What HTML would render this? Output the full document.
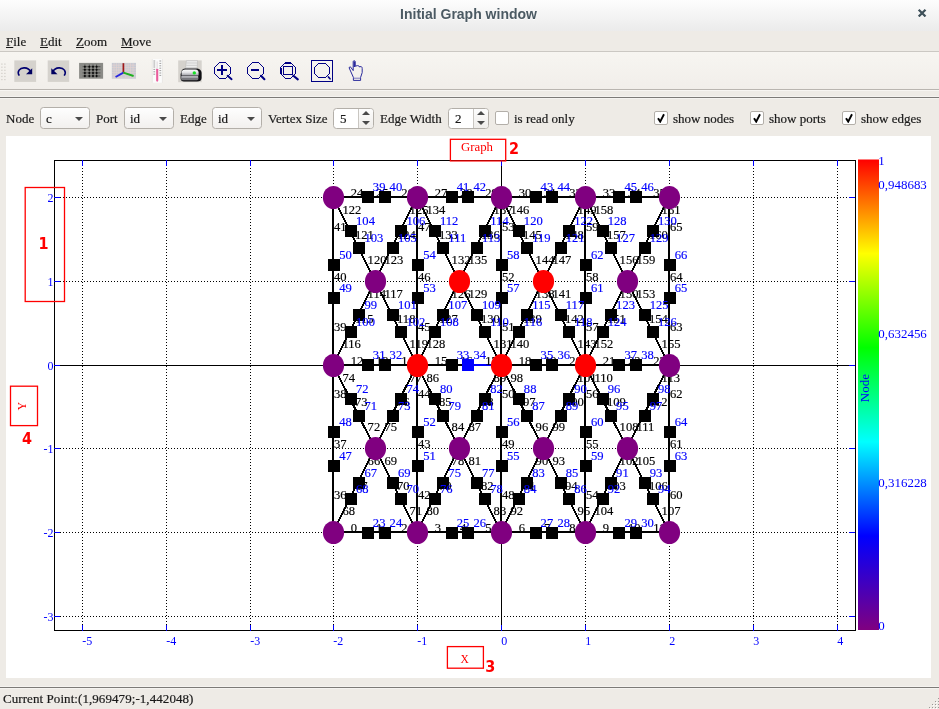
<!DOCTYPE html>
<html lang="en">
<head>
<meta charset="utf-8">
<title>Initial Graph window</title>
<style>
html,body{margin:0;padding:0;}
body{width:939px;height:709px;overflow:hidden;background:#eeebe6;font-family:"Liberation Serif",serif;font-size:13px;color:#1a1a1a;position:relative;-webkit-text-stroke:0.2px #1a1a1a;}
.abs{position:absolute;will-change:transform;}
#titlebar{left:0;top:0;width:939px;height:31px;background:linear-gradient(#fdfdfd 0,#f6f6f6 12px,#ebebeb 31px);}
#title{left:-1px;top:5px;width:939px;text-align:center;font-family:"Liberation Sans",sans-serif;font-weight:bold;font-size:14px;color:#4b5a63;line-height:18px;white-space:nowrap;text-shadow:0 1px 0 rgba(255,255,255,.8);-webkit-text-stroke:0;}
#close{left:912px;top:3px;width:18px;height:20px;font-family:"DejaVu Sans",sans-serif;font-weight:bold;font-size:15px;color:#4b5a63;line-height:20px;text-align:center;}
#menubar{left:0;top:31px;width:939px;height:20px;}
.menu{top:34px;line-height:16px;font-size:13px;white-space:nowrap;}
.menu u{text-decoration:underline;text-underline-offset:1px;}
#toolbar{left:0;top:51px;width:939px;height:39px;background:linear-gradient(#f7f5f1,#f1eeea);border-top:1px solid #cbc8c3;border-bottom:1px solid #b9b5b0;box-sizing:border-box;box-shadow:0 1px 0 #f7f5f2;}
#sep2{left:0;top:96px;width:939px;height:3px;background:linear-gradient(#f5f3f0 0,#f5f3f0 1px,#7c7a77 1px,#7c7a77 2px,#f5f3f0 2px);}
.lbl{top:111px;line-height:16px;white-space:nowrap;}
.combo{top:107px;height:22px;width:50px;box-sizing:border-box;border:1px solid #b3afa9;border-radius:3.5px;background:linear-gradient(#fefefe,#f2f0ee);}
.combo span{position:absolute;left:5px;top:3px;line-height:16px;}
.combo i{position:absolute;right:6px;top:8.5px;width:0;height:0;border-left:4px solid transparent;border-right:4px solid transparent;border-top:4.6px solid #4a4a4a;}
.spin{top:108px;height:21px;width:41px;box-sizing:border-box;border:1px solid #b3afa9;border-radius:3.5px;background:#fff;}
.spin span{position:absolute;left:6px;top:2px;line-height:16px;}
.spin b{position:absolute;right:0;top:0;width:14px;height:19px;border-left:1px solid #c9c6c1;background:linear-gradient(#fdfdfd,#efedea);border-radius:0 3px 3px 0;}
.spin b:before{content:"";position:absolute;left:3.2px;top:2.4px;border-left:4px solid transparent;border-right:4px solid transparent;border-bottom:4.8px solid #4a4a4a;}
.spin b:after{content:"";position:absolute;left:3.2px;top:12.2px;border-left:4px solid transparent;border-right:4px solid transparent;border-top:4.8px solid #4a4a4a;}
.chk{top:111px;width:14px;height:14px;box-sizing:border-box;border:1px solid #b3afa9;border-radius:2px;background:#fff;}
.chk svg{position:absolute;left:1px;top:1px;}
#panel{left:6px;top:136px;width:925px;height:542px;background:#fff;}
#sep3{left:0;top:686px;width:939px;height:3px;background:linear-gradient(#f5f3f0 0,#f5f3f0 1px,#7c7a77 1px,#7c7a77 2px,#f5f3f0 2px);}
#status{left:3px;top:691px;line-height:16px;white-space:nowrap;letter-spacing:0.07px;}
</style>
</head>
<body>
<div id="titlebar" class="abs"></div>
<div id="title" class="abs">Initial Graph window</div>
<svg class="abs" style="left:912px;top:3px" width="20" height="20" viewBox="912 3 20 20"><path d="M918.7 10.7L925.5 17.5M925.5 10.7L918.7 17.5" stroke="#fff" stroke-width="2.3" opacity=".8"/><path d="M918.7 9.7L925.5 16.5M925.5 9.7L918.7 16.5" stroke="#3f515a" stroke-width="2.3"/></svg>
<div id="menubar" class="abs"></div>
<div class="abs menu" style="left:6px"><u>F</u>ile</div>
<div class="abs menu" style="left:40px"><u>E</u>dit</div>
<div class="abs menu" style="left:76px"><u>Z</u>oom</div>
<div class="abs menu" style="left:121px"><u>M</u>ove</div>
<div id="toolbar" class="abs"></div>
<svg class="abs" style="left:0;top:52px" width="400" height="38" viewBox="0 52 400 38">
<defs>
<pattern id="hd" x="1" y="63" width="3" height="3" patternUnits="userSpaceOnUse"><rect x="0" y="0" width="1" height="1" fill="#c9c6c0"/></pattern>
<linearGradient id="prb" x1="0" y1="0" x2="0" y2="1"><stop offset="0" stop-color="#ffffff"/><stop offset="0.5" stop-color="#e4e4e8"/><stop offset="1" stop-color="#a2a2a8"/></linearGradient>
</defs>
<!-- handle -->
<g fill="#cfccc6"><rect x="1.3" y="63.5" width="1.2" height="1.2"/><rect x="4.3" y="63.5" width="1.2" height="1.2"/><rect x="1.3" y="66.6" width="1.2" height="1.2"/><rect x="4.3" y="66.6" width="1.2" height="1.2"/><rect x="1.3" y="69.7" width="1.2" height="1.2"/><rect x="4.3" y="69.7" width="1.2" height="1.2"/><rect x="1.3" y="72.8" width="1.2" height="1.2"/><rect x="4.3" y="72.8" width="1.2" height="1.2"/><rect x="1.3" y="75.9" width="1.2" height="1.2"/><rect x="4.3" y="75.9" width="1.2" height="1.2"/><rect x="1.3" y="79" width="1.2" height="1.2"/><rect x="4.3" y="79" width="1.2" height="1.2"/></g>
<!-- redo -->
<rect x="14.3" y="60.4" width="21.8" height="21.5" fill="#d5d2cd"/>
<path d="M19.3 75.6C16.6 71.6 19.6 67.6 24.6 67.9C27.6 68.1 29.6 69.6 30.8 71.6" fill="none" stroke="#000070" stroke-width="1.6"/>
<path d="M32.2 68.2L32.2 74.2L26 74.2Z" fill="#000060"/>
<!-- undo -->
<rect x="47.7" y="60.4" width="21.5" height="21.5" fill="#d5d2cd"/>
<path d="M64.2 75.6C66.9 71.6 63.9 67.6 58.9 67.9C55.9 68.1 53.9 69.6 52.7 71.6" fill="none" stroke="#000070" stroke-width="1.6"/>
<path d="M51.3 68.2L51.3 74.2L57.5 74.2Z" fill="#000060"/>
<!-- grid -->
<rect x="79.1" y="62.9" width="24" height="15.8" fill="#8b8b87"/>
<g stroke="#3a3a38" stroke-width="1" opacity="0.75"><path d="M84.9 64.5V77.5M89.3 64.5V77.5M93 64.5V77.5M96.6 64.5V77.5M82.6 66.7H100.4M82.6 69.7H100.4M82.6 72.9H100.4M82.6 76H100.4"/></g>
<g fill="#0a0a0a"><circle cx="84.9" cy="66.7" r="1"/><circle cx="89.3" cy="66.7" r="1"/><circle cx="93" cy="66.7" r="1"/><circle cx="96.6" cy="66.7" r="1"/><circle cx="84.9" cy="69.7" r="1"/><circle cx="89.3" cy="69.7" r="1"/><circle cx="93" cy="69.7" r="1"/><circle cx="96.6" cy="69.7" r="1"/><circle cx="84.9" cy="72.9" r="1"/><circle cx="89.3" cy="72.9" r="1"/><circle cx="93" cy="72.9" r="1"/><circle cx="96.6" cy="72.9" r="1"/><circle cx="84.9" cy="76" r="1"/><circle cx="89.3" cy="76" r="1"/><circle cx="93" cy="76" r="1"/><circle cx="96.6" cy="76" r="1"/></g>
<!-- axes -->
<rect x="111.8" y="62.9" width="24.2" height="15.8" fill="#c6cad4"/>
<g stroke="#e4d2d0" stroke-width="0.7"><path d="M114 63V78.6M116.4 63V78.6M118.8 63V78.6M121.2 63V78.6M125.8 63V78.6M128.2 63V78.6M130.6 63V78.6M133 63V78.6M112 65.2H136M112 67.6H136M112 70H136M112 72.4H136M112 74.8H136M112 77.2H136"/></g>
<path d="M123.4 63.2V72.6" stroke="#a01818" stroke-width="1.7" fill="none"/>
<path d="M123.4 72.6L115.6 77" stroke="#2828e0" stroke-width="1.9" fill="none"/>
<path d="M123.4 72.6L133.6 76" stroke="#20b020" stroke-width="1.9" fill="none"/>
<!-- thermometer -->
<rect x="152.1" y="59" width="10.5" height="23.7" fill="#fbfbfb"/>
<path d="M152.3 59V82.7M162.4 59V82.7" stroke="#dddad6" stroke-width="0.6"/>
<g stroke="#777" stroke-width="0.7"><path d="M153.4 61H155.2M153.4 63H155.2M153.4 65H155.2M153.4 67H155.2M153.4 69.4H155.2M153.4 71.8H155.2M153.4 74.2H155.2M159.4 61H161.2M159.4 63.4H161.2M159.4 65.8H161.2M159.4 68.2H161.2M159.4 70.6H161.2M159.4 73H161.2M159.4 75.4H161.2"/></g>
<path d="M157.2 69.2V80.6" stroke="#ea5c9c" stroke-width="2.1" stroke-linecap="round"/>
<path d="M157.2 61.5V69" stroke="#e8e4e6" stroke-width="1.6"/>
<!-- printer -->
<rect x="178.2" y="60.4" width="23.5" height="21.8" fill="#d5d2cd"/>
<path d="M186.4 60.6H197.6L197 70H185.4Z" fill="#ececec" stroke="#b4b4b4" stroke-width="0.5"/>
<path d="M186.5 63H197.4M186.2 65.4H197.2M186 67.6H197" stroke="#c4c4c4" stroke-width="0.7"/>
<path d="M181.5 72C181.5 70 183 68.6 185.6 68.6H196C199.6 68.6 201.6 70.6 201.6 73V78C201.6 80.4 200 81.6 197 81.6H184C182 81.6 180.6 80.6 180.6 78.6V74Z" fill="#101014"/>
<path d="M181.6 72.6C181.6 70.6 183 69.4 185.4 69.4H195.4C197.6 69.4 198.6 70.8 198.6 72.6V75.4H181.6Z" fill="url(#prb)"/>
<rect x="181" y="75.6" width="17.4" height="4.6" rx="1.4" fill="#77777d"/>
<rect x="181.6" y="76" width="16.4" height="1.8" fill="#b0b0b6"/>
<circle cx="194.3" cy="72.9" r="1.7" fill="#14e024"/>
<!-- zoom in -->
<g fill="none" stroke="#000084">
<g shape-rendering="crispEdges" stroke-width="1">
<path d="M219.5 62.5H225.5L230.5 67.5V73.5L225.5 78.5H219.5L214.5 73.5V67.5Z"/>
<path d="M252.5 62.5H258.5L263.5 67.5V73.5L258.5 78.5H252.5L247.5 73.5V67.5Z"/>
<path d="M285.5 62.5H290.5L295.5 67.5V73.5L290.5 78.5H285.5L280.5 73.5V67.5Z"/>
<path d="M285 63.5H291M281.5 68V74"/>
<rect x="283.5" y="66.5" width="9" height="8"/>
<rect x="311.5" y="60.5" width="21" height="21"/>
<path d="M318.5 63.5H325.5L329.5 67.5V73.5L325.5 77.5H318.5L314.5 73.5V67.5Z"/>
</g>
<g shape-rendering="crispEdges" stroke-width="2">
<path d="M217 70H227M222 65V75"/>
<path d="M251 70H259"/>
</g>
<path d="M227.6 75.8L231.6 79.2" stroke-width="1.9" stroke-linecap="round"/>
<path d="M261 75.8L264.4 79.2" stroke-width="2.1" stroke-linecap="round"/>
<path d="M293.4 75.8L297.8 79.4" stroke-width="2.1" stroke-linecap="round"/>
<path d="M328.4 77L330 78.8" stroke-width="1.7" stroke-linecap="round"/>
<!-- hand -->
<path d="M353.4 80.4V77.4L349 67.6L350.4 66.8L353.2 70.6V61.6C353.2 60.4 355.2 60.4 355.2 61.6V66.2L357.6 65.6C358.6 65.4 359 66 359 66.8L361 66.6C362 66.8 362.2 67.6 362.2 68.6V72.6L360.6 77.4V80.4Z" stroke-width="1" stroke="#2a2a9c"/>
<path d="M354.4 61.4V67" stroke-width="1.6" stroke="#2a2a9c"/>
<path d="M353.4 78.2H360.6" stroke-width="0.8" stroke="#5a5ab4"/>
</g>
</svg>

<div id="sep2" class="abs"></div>
<div class="abs lbl" style="left:6px">Node</div>
<div class="abs combo" style="left:40px"><span>c</span><i></i></div>
<div class="abs lbl" style="left:96px">Port</div>
<div class="abs combo" style="left:124px"><span>id</span><i></i></div>
<div class="abs lbl" style="left:180px">Edge</div>
<div class="abs combo" style="left:212px"><span>id</span><i></i></div>
<div class="abs lbl" style="left:268px">Vertex Size</div>
<div class="abs spin" style="left:333px"><span>5</span><b></b></div>
<div class="abs lbl" style="left:380px">Edge Width</div>
<div class="abs spin" style="left:448px"><span>2</span><b></b></div>
<div class="abs chk" style="left:495px"></div>
<div class="abs lbl" style="left:514px">is read only</div>
<div class="abs chk" style="left:654px"><svg width="10" height="10" viewBox="0 0 10 10"><path d="M2 5.2L4.2 8.6L8 1.2" fill="none" stroke="#000" stroke-width="1.9"/></svg></div>
<div class="abs lbl" style="left:673px">show nodes</div>
<div class="abs chk" style="left:750px"><svg width="10" height="10" viewBox="0 0 10 10"><path d="M2 5.2L4.2 8.6L8 1.2" fill="none" stroke="#000" stroke-width="1.9"/></svg></div>
<div class="abs lbl" style="left:769px">show ports</div>
<div class="abs chk" style="left:842px"><svg width="10" height="10" viewBox="0 0 10 10"><path d="M2 5.2L4.2 8.6L8 1.2" fill="none" stroke="#000" stroke-width="1.9"/></svg></div>
<div class="abs lbl" style="left:861px">show edges</div>
<div id="panel" class="abs">
<svg id="plot" width="925" height="542" viewBox="6 136 925 542">
<g stroke="#000" stroke-width="1" stroke-dasharray="1 2" fill="none" shape-rendering="crispEdges">
<path d="M82.5 631V160"/>
<path d="M166.5 631V160"/>
<path d="M250.5 631V160"/>
<path d="M333.5 631V160"/>
<path d="M417.5 631V160"/>
<path d="M585.5 631V160"/>
<path d="M669.5 631V160"/>
<path d="M753.5 631V160"/>
<path d="M837.5 631V160"/>
<path d="M54 616.5H856"/>
<path d="M54 532.5H856"/>
<path d="M54 448.5H856"/>
<path d="M54 281.5H856"/>
<path d="M54 197.5H856"/>
</g>
<g stroke="#000" stroke-width="1" fill="none" shape-rendering="crispEdges">
<path d="M501.5 160V631"/>
<path d="M54 365.5H856"/>
<rect x="54.5" y="160.5" width="801" height="470"/>
</g>
<g stroke="#00f" stroke-width="1" fill="none" shape-rendering="crispEdges">
<path d="M82.5 631v-6M82.5 160v6M166.5 631v-6M166.5 160v6M250.5 631v-6M250.5 160v6M333.5 631v-6M333.5 160v6M417.5 631v-6M417.5 160v6M501.5 631v-6M501.5 160v6M585.5 631v-6M585.5 160v6M669.5 631v-6M669.5 160v6M753.5 631v-6M753.5 160v6M837.5 631v-6M837.5 160v6M54 616.5h6M855 616.5h-6M54 532.5h6M855 532.5h-6M54 448.5h6M855 448.5h-6M54 365.5h6M855 365.5h-6M54 281.5h6M855 281.5h-6M54 197.5h6M855 197.5h-6"/>
</g>
<g stroke-width="2" fill="none" shape-rendering="crispEdges">
<path stroke="#000" d="M333 532L366.6 532M366.6 532L383.4 532M383.4 532L417 532M417 532L450.6 532M450.6 532L467.4 532M467.4 532L501 532M501 532L534.6 532M534.6 532L551.4 532M551.4 532L585 532M585 532L618.6 532M618.6 532L635.4 532M635.4 532L669 532M333 365L366.6 365M366.6 365L383.4 365M383.4 365L417 365M417 365L450.6 365M450.6 365L467.4 365M501 365L534.6 365M534.6 365L551.4 365M551.4 365L585 365M585 365L618.6 365M618.6 365L635.4 365M635.4 365L669 365M333 197L366.6 197M366.6 197L383.4 197M383.4 197L417 197M417 197L450.6 197M450.6 197L467.4 197M467.4 197L501 197M501 197L534.6 197M534.6 197L551.4 197M551.4 197L585 197M585 197L618.6 197M618.6 197L635.4 197M635.4 197L669 197M333 532L333 465.2M333 465.2L333 431.8M333 431.8L333 365M333 365L333 297.8M333 297.8L333 264.2M333 264.2L333 197M417 532L417 465.2M417 465.2L417 431.8M417 431.8L417 365M417 365L417 297.8M417 297.8L417 264.2M417 264.2L417 197M501 532L501 465.2M501 465.2L501 431.8M501 431.8L501 365M501 365L501 297.8M501 297.8L501 264.2M501 264.2L501 197M585 532L585 465.2M585 465.2L585 431.8M585 431.8L585 365M585 365L585 297.8M585 297.8L585 264.2M585 264.2L585 197M669 532L669 465.2M669 465.2L669 431.8M669 431.8L669 365M669 365L669 297.8M669 297.8L669 264.2M669 264.2L669 197M375 448L358.2 481.6M358.2 481.6L349.8 498.4M349.8 498.4L333 532M375 448L391.8 481.6M391.8 481.6L400.2 498.4M400.2 498.4L417 532M375 448L358.2 414.8M358.2 414.8L349.8 398.2M349.8 398.2L333 365M375 448L391.8 414.8M391.8 414.8L400.2 398.2M400.2 398.2L417 365M459 448L442.2 481.6M442.2 481.6L433.8 498.4M433.8 498.4L417 532M459 448L475.8 481.6M475.8 481.6L484.2 498.4M484.2 498.4L501 532M459 448L442.2 414.8M442.2 414.8L433.8 398.2M433.8 398.2L417 365M459 448L475.8 414.8M475.8 414.8L484.2 398.2M484.2 398.2L501 365M543 448L526.2 481.6M526.2 481.6L517.8 498.4M517.8 498.4L501 532M543 448L559.8 481.6M559.8 481.6L568.2 498.4M568.2 498.4L585 532M543 448L526.2 414.8M526.2 414.8L517.8 398.2M517.8 398.2L501 365M543 448L559.8 414.8M559.8 414.8L568.2 398.2M568.2 398.2L585 365M627 448L610.2 481.6M610.2 481.6L601.8 498.4M601.8 498.4L585 532M627 448L643.8 481.6M643.8 481.6L652.2 498.4M652.2 498.4L669 532M627 448L610.2 414.8M610.2 414.8L601.8 398.2M601.8 398.2L585 365M627 448L643.8 414.8M643.8 414.8L652.2 398.2M652.2 398.2L669 365M375 281L358.2 314.6M358.2 314.6L349.8 331.4M349.8 331.4L333 365M375 281L391.8 314.6M391.8 314.6L400.2 331.4M400.2 331.4L417 365M375 281L358.2 247.4M358.2 247.4L349.8 230.6M349.8 230.6L333 197M375 281L391.8 247.4M391.8 247.4L400.2 230.6M400.2 230.6L417 197M459 281L442.2 314.6M442.2 314.6L433.8 331.4M433.8 331.4L417 365M459 281L475.8 314.6M475.8 314.6L484.2 331.4M484.2 331.4L501 365M459 281L442.2 247.4M442.2 247.4L433.8 230.6M433.8 230.6L417 197M459 281L475.8 247.4M475.8 247.4L484.2 230.6M484.2 230.6L501 197M543 281L526.2 314.6M526.2 314.6L517.8 331.4M517.8 331.4L501 365M543 281L559.8 314.6M559.8 314.6L568.2 331.4M568.2 331.4L585 365M543 281L526.2 247.4M526.2 247.4L517.8 230.6M517.8 230.6L501 197M543 281L559.8 247.4M559.8 247.4L568.2 230.6M568.2 230.6L585 197M627 281L610.2 314.6M610.2 314.6L601.8 331.4M601.8 331.4L585 365M627 281L643.8 314.6M643.8 314.6L652.2 331.4M652.2 331.4L669 365M627 281L610.2 247.4M610.2 247.4L601.8 230.6M601.8 230.6L585 197M627 281L643.8 247.4M643.8 247.4L652.2 230.6M652.2 230.6L669 197"/>
<path stroke="#00f" d="M467.4 365L501 365"/>
</g>
<g font-family="'Liberation Serif',serif" font-size="12.0" fill="#000" stroke="#000" stroke-width="0.15">
<text transform="translate(350.8 531.9) scale(1.05 1)">0</text>
<text transform="translate(376 531.9) scale(1.05 1)">1</text>
<text transform="translate(401.2 531.9) scale(1.05 1)">2</text>
<text transform="translate(434.8 531.9) scale(1.05 1)">3</text>
<text transform="translate(460 531.9) scale(1.05 1)">4</text>
<text transform="translate(485.2 531.9) scale(1.05 1)">5</text>
<text transform="translate(518.8 531.9) scale(1.05 1)">6</text>
<text transform="translate(544 531.9) scale(1.05 1)">7</text>
<text transform="translate(569.2 531.9) scale(1.05 1)">8</text>
<text transform="translate(602.8 531.9) scale(1.05 1)">9</text>
<text transform="translate(628 531.9) scale(1.05 1)">10</text>
<text transform="translate(653.2 531.9) scale(1.05 1)">11</text>
<text transform="translate(350.8 364.9) scale(1.05 1)">12</text>
<text transform="translate(376 364.9) scale(1.05 1)">13</text>
<text transform="translate(401.2 364.9) scale(1.05 1)">14</text>
<text transform="translate(434.8 364.9) scale(1.05 1)">15</text>
<text transform="translate(460 364.9) scale(1.05 1)">16</text>
<text transform="translate(485.2 364.9) scale(1.05 1)">17</text>
<text transform="translate(518.8 364.9) scale(1.05 1)">18</text>
<text transform="translate(544 364.9) scale(1.05 1)">19</text>
<text transform="translate(569.2 364.9) scale(1.05 1)">20</text>
<text transform="translate(602.8 364.9) scale(1.05 1)">21</text>
<text transform="translate(628 364.9) scale(1.05 1)">22</text>
<text transform="translate(653.2 364.9) scale(1.05 1)">23</text>
<text transform="translate(350.8 196.9) scale(1.05 1)">24</text>
<text transform="translate(376 196.9) scale(1.05 1)">25</text>
<text transform="translate(401.2 196.9) scale(1.05 1)">26</text>
<text transform="translate(434.8 196.9) scale(1.05 1)">27</text>
<text transform="translate(460 196.9) scale(1.05 1)">28</text>
<text transform="translate(485.2 196.9) scale(1.05 1)">29</text>
<text transform="translate(518.8 196.9) scale(1.05 1)">30</text>
<text transform="translate(544 196.9) scale(1.05 1)">31</text>
<text transform="translate(569.2 196.9) scale(1.05 1)">32</text>
<text transform="translate(602.8 196.9) scale(1.05 1)">33</text>
<text transform="translate(628 196.9) scale(1.05 1)">34</text>
<text transform="translate(653.2 196.9) scale(1.05 1)">35</text>
<text transform="translate(334 498.5) scale(1.05 1)">36</text>
<text transform="translate(334 448.4) scale(1.05 1)">37</text>
<text transform="translate(334 398.3) scale(1.05 1)">38</text>
<text transform="translate(334 331.3) scale(1.05 1)">39</text>
<text transform="translate(334 280.9) scale(1.05 1)">40</text>
<text transform="translate(334 230.5) scale(1.05 1)">41</text>
<text transform="translate(418 498.5) scale(1.05 1)">42</text>
<text transform="translate(418 448.4) scale(1.05 1)">43</text>
<text transform="translate(418 398.3) scale(1.05 1)">44</text>
<text transform="translate(418 331.3) scale(1.05 1)">45</text>
<text transform="translate(418 280.9) scale(1.05 1)">46</text>
<text transform="translate(418 230.5) scale(1.05 1)">47</text>
<text transform="translate(502 498.5) scale(1.05 1)">48</text>
<text transform="translate(502 448.4) scale(1.05 1)">49</text>
<text transform="translate(502 398.3) scale(1.05 1)">50</text>
<text transform="translate(502 331.3) scale(1.05 1)">51</text>
<text transform="translate(502 280.9) scale(1.05 1)">52</text>
<text transform="translate(502 230.5) scale(1.05 1)">53</text>
<text transform="translate(586 498.5) scale(1.05 1)">54</text>
<text transform="translate(586 448.4) scale(1.05 1)">55</text>
<text transform="translate(586 398.3) scale(1.05 1)">56</text>
<text transform="translate(586 331.3) scale(1.05 1)">57</text>
<text transform="translate(586 280.9) scale(1.05 1)">58</text>
<text transform="translate(586 230.5) scale(1.05 1)">59</text>
<text transform="translate(670 498.5) scale(1.05 1)">60</text>
<text transform="translate(670 448.4) scale(1.05 1)">61</text>
<text transform="translate(670 398.3) scale(1.05 1)">62</text>
<text transform="translate(670 331.3) scale(1.05 1)">63</text>
<text transform="translate(670 280.9) scale(1.05 1)">64</text>
<text transform="translate(670 230.5) scale(1.05 1)">65</text>
<text transform="translate(367.6 464.7) scale(1.05 1)">66</text>
<text transform="translate(355 489.9) scale(1.05 1)">67</text>
<text transform="translate(342.4 515.1) scale(1.05 1)">68</text>
<text transform="translate(384.4 464.7) scale(1.05 1)">69</text>
<text transform="translate(397 489.9) scale(1.05 1)">70</text>
<text transform="translate(409.6 515.1) scale(1.05 1)">71</text>
<text transform="translate(367.6 431.3) scale(1.05 1)">72</text>
<text transform="translate(355 406.4) scale(1.05 1)">73</text>
<text transform="translate(342.4 381.5) scale(1.05 1)">74</text>
<text transform="translate(384.4 431.3) scale(1.05 1)">75</text>
<text transform="translate(397 406.4) scale(1.05 1)">76</text>
<text transform="translate(409.6 381.5) scale(1.05 1)">77</text>
<text transform="translate(451.6 464.7) scale(1.05 1)">78</text>
<text transform="translate(439 489.9) scale(1.05 1)">79</text>
<text transform="translate(426.4 515.1) scale(1.05 1)">80</text>
<text transform="translate(468.4 464.7) scale(1.05 1)">81</text>
<text transform="translate(481 489.9) scale(1.05 1)">82</text>
<text transform="translate(493.6 515.1) scale(1.05 1)">83</text>
<text transform="translate(451.6 431.3) scale(1.05 1)">84</text>
<text transform="translate(439 406.4) scale(1.05 1)">85</text>
<text transform="translate(426.4 381.5) scale(1.05 1)">86</text>
<text transform="translate(468.4 431.3) scale(1.05 1)">87</text>
<text transform="translate(481 406.4) scale(1.05 1)">88</text>
<text transform="translate(493.6 381.5) scale(1.05 1)">89</text>
<text transform="translate(535.6 464.7) scale(1.05 1)">90</text>
<text transform="translate(523 489.9) scale(1.05 1)">91</text>
<text transform="translate(510.4 515.1) scale(1.05 1)">92</text>
<text transform="translate(552.4 464.7) scale(1.05 1)">93</text>
<text transform="translate(565 489.9) scale(1.05 1)">94</text>
<text transform="translate(577.6 515.1) scale(1.05 1)">95</text>
<text transform="translate(535.6 431.3) scale(1.05 1)">96</text>
<text transform="translate(523 406.4) scale(1.05 1)">97</text>
<text transform="translate(510.4 381.5) scale(1.05 1)">98</text>
<text transform="translate(552.4 431.3) scale(1.05 1)">99</text>
<text transform="translate(565 406.4) scale(1.05 1)">100</text>
<text transform="translate(577.6 381.5) scale(1.05 1)">101</text>
<text transform="translate(619.6 464.7) scale(1.05 1)">102</text>
<text transform="translate(607 489.9) scale(1.05 1)">103</text>
<text transform="translate(594.4 515.1) scale(1.05 1)">104</text>
<text transform="translate(636.4 464.7) scale(1.05 1)">105</text>
<text transform="translate(649 489.9) scale(1.05 1)">106</text>
<text transform="translate(661.6 515.1) scale(1.05 1)">107</text>
<text transform="translate(619.6 431.3) scale(1.05 1)">108</text>
<text transform="translate(607 406.4) scale(1.05 1)">109</text>
<text transform="translate(594.4 381.5) scale(1.05 1)">110</text>
<text transform="translate(636.4 431.3) scale(1.05 1)">111</text>
<text transform="translate(649 406.4) scale(1.05 1)">112</text>
<text transform="translate(661.6 381.5) scale(1.05 1)">113</text>
<text transform="translate(367.6 297.7) scale(1.05 1)">114</text>
<text transform="translate(355 322.9) scale(1.05 1)">115</text>
<text transform="translate(342.4 348.1) scale(1.05 1)">116</text>
<text transform="translate(384.4 297.7) scale(1.05 1)">117</text>
<text transform="translate(397 322.9) scale(1.05 1)">118</text>
<text transform="translate(409.6 348.1) scale(1.05 1)">119</text>
<text transform="translate(367.6 264.1) scale(1.05 1)">120</text>
<text transform="translate(355 238.9) scale(1.05 1)">121</text>
<text transform="translate(342.4 213.7) scale(1.05 1)">122</text>
<text transform="translate(384.4 264.1) scale(1.05 1)">123</text>
<text transform="translate(397 238.9) scale(1.05 1)">124</text>
<text transform="translate(409.6 213.7) scale(1.05 1)">125</text>
<text transform="translate(451.6 297.7) scale(1.05 1)">126</text>
<text transform="translate(439 322.9) scale(1.05 1)">127</text>
<text transform="translate(426.4 348.1) scale(1.05 1)">128</text>
<text transform="translate(468.4 297.7) scale(1.05 1)">129</text>
<text transform="translate(481 322.9) scale(1.05 1)">130</text>
<text transform="translate(493.6 348.1) scale(1.05 1)">131</text>
<text transform="translate(451.6 264.1) scale(1.05 1)">132</text>
<text transform="translate(439 238.9) scale(1.05 1)">133</text>
<text transform="translate(426.4 213.7) scale(1.05 1)">134</text>
<text transform="translate(468.4 264.1) scale(1.05 1)">135</text>
<text transform="translate(481 238.9) scale(1.05 1)">136</text>
<text transform="translate(493.6 213.7) scale(1.05 1)">137</text>
<text transform="translate(535.6 297.7) scale(1.05 1)">138</text>
<text transform="translate(523 322.9) scale(1.05 1)">139</text>
<text transform="translate(510.4 348.1) scale(1.05 1)">140</text>
<text transform="translate(552.4 297.7) scale(1.05 1)">141</text>
<text transform="translate(565 322.9) scale(1.05 1)">142</text>
<text transform="translate(577.6 348.1) scale(1.05 1)">143</text>
<text transform="translate(535.6 264.1) scale(1.05 1)">144</text>
<text transform="translate(523 238.9) scale(1.05 1)">145</text>
<text transform="translate(510.4 213.7) scale(1.05 1)">146</text>
<text transform="translate(552.4 264.1) scale(1.05 1)">147</text>
<text transform="translate(565 238.9) scale(1.05 1)">148</text>
<text transform="translate(577.6 213.7) scale(1.05 1)">149</text>
<text transform="translate(619.6 297.7) scale(1.05 1)">150</text>
<text transform="translate(607 322.9) scale(1.05 1)">151</text>
<text transform="translate(594.4 348.1) scale(1.05 1)">152</text>
<text transform="translate(636.4 297.7) scale(1.05 1)">153</text>
<text transform="translate(649 322.9) scale(1.05 1)">154</text>
<text transform="translate(661.6 348.1) scale(1.05 1)">155</text>
<text transform="translate(619.6 264.1) scale(1.05 1)">156</text>
<text transform="translate(607 238.9) scale(1.05 1)">157</text>
<text transform="translate(594.4 213.7) scale(1.05 1)">158</text>
<text transform="translate(636.4 264.1) scale(1.05 1)">159</text>
<text transform="translate(649 238.9) scale(1.05 1)">160</text>
<text transform="translate(661.6 213.7) scale(1.05 1)">161</text>
</g>
<g shape-rendering="crispEdges">
<rect x="362" y="527" width="12" height="12" fill="#000"/>
<rect x="379" y="527" width="12" height="12" fill="#000"/>
<rect x="446" y="527" width="12" height="12" fill="#000"/>
<rect x="462" y="527" width="12" height="12" fill="#000"/>
<rect x="530" y="527" width="12" height="12" fill="#000"/>
<rect x="546" y="527" width="12" height="12" fill="#000"/>
<rect x="613" y="527" width="12" height="12" fill="#000"/>
<rect x="630" y="527" width="12" height="12" fill="#000"/>
<rect x="362" y="359" width="12" height="12" fill="#000"/>
<rect x="379" y="359" width="12" height="12" fill="#000"/>
<rect x="446" y="359" width="12" height="12" fill="#000"/>
<rect x="462" y="359" width="12" height="12" fill="#00f"/>
<rect x="530" y="359" width="12" height="12" fill="#000"/>
<rect x="546" y="359" width="12" height="12" fill="#000"/>
<rect x="613" y="359" width="12" height="12" fill="#000"/>
<rect x="630" y="359" width="12" height="12" fill="#000"/>
<rect x="362" y="191" width="12" height="12" fill="#000"/>
<rect x="379" y="191" width="12" height="12" fill="#000"/>
<rect x="446" y="191" width="12" height="12" fill="#000"/>
<rect x="462" y="191" width="12" height="12" fill="#000"/>
<rect x="530" y="191" width="12" height="12" fill="#000"/>
<rect x="546" y="191" width="12" height="12" fill="#000"/>
<rect x="613" y="191" width="12" height="12" fill="#000"/>
<rect x="630" y="191" width="12" height="12" fill="#000"/>
<rect x="328" y="460" width="12" height="12" fill="#000"/>
<rect x="328" y="426" width="12" height="12" fill="#000"/>
<rect x="328" y="292" width="12" height="12" fill="#000"/>
<rect x="328" y="259" width="12" height="12" fill="#000"/>
<rect x="412" y="460" width="12" height="12" fill="#000"/>
<rect x="412" y="426" width="12" height="12" fill="#000"/>
<rect x="412" y="292" width="12" height="12" fill="#000"/>
<rect x="412" y="259" width="12" height="12" fill="#000"/>
<rect x="496" y="460" width="12" height="12" fill="#000"/>
<rect x="496" y="426" width="12" height="12" fill="#000"/>
<rect x="496" y="292" width="12" height="12" fill="#000"/>
<rect x="496" y="259" width="12" height="12" fill="#000"/>
<rect x="580" y="460" width="12" height="12" fill="#000"/>
<rect x="580" y="426" width="12" height="12" fill="#000"/>
<rect x="580" y="292" width="12" height="12" fill="#000"/>
<rect x="580" y="259" width="12" height="12" fill="#000"/>
<rect x="664" y="460" width="12" height="12" fill="#000"/>
<rect x="664" y="426" width="12" height="12" fill="#000"/>
<rect x="664" y="292" width="12" height="12" fill="#000"/>
<rect x="664" y="259" width="12" height="12" fill="#000"/>
<rect x="353" y="477" width="12" height="12" fill="#000"/>
<rect x="345" y="493" width="12" height="12" fill="#000"/>
<rect x="387" y="477" width="12" height="12" fill="#000"/>
<rect x="395" y="493" width="12" height="12" fill="#000"/>
<rect x="353" y="410" width="12" height="12" fill="#000"/>
<rect x="345" y="393" width="12" height="12" fill="#000"/>
<rect x="387" y="410" width="12" height="12" fill="#000"/>
<rect x="395" y="393" width="12" height="12" fill="#000"/>
<rect x="437" y="477" width="12" height="12" fill="#000"/>
<rect x="429" y="493" width="12" height="12" fill="#000"/>
<rect x="471" y="477" width="12" height="12" fill="#000"/>
<rect x="479" y="493" width="12" height="12" fill="#000"/>
<rect x="437" y="410" width="12" height="12" fill="#000"/>
<rect x="429" y="393" width="12" height="12" fill="#000"/>
<rect x="471" y="410" width="12" height="12" fill="#000"/>
<rect x="479" y="393" width="12" height="12" fill="#000"/>
<rect x="521" y="477" width="12" height="12" fill="#000"/>
<rect x="513" y="493" width="12" height="12" fill="#000"/>
<rect x="555" y="477" width="12" height="12" fill="#000"/>
<rect x="563" y="493" width="12" height="12" fill="#000"/>
<rect x="521" y="410" width="12" height="12" fill="#000"/>
<rect x="513" y="393" width="12" height="12" fill="#000"/>
<rect x="555" y="410" width="12" height="12" fill="#000"/>
<rect x="563" y="393" width="12" height="12" fill="#000"/>
<rect x="605" y="477" width="12" height="12" fill="#000"/>
<rect x="597" y="493" width="12" height="12" fill="#000"/>
<rect x="639" y="477" width="12" height="12" fill="#000"/>
<rect x="647" y="493" width="12" height="12" fill="#000"/>
<rect x="605" y="410" width="12" height="12" fill="#000"/>
<rect x="597" y="393" width="12" height="12" fill="#000"/>
<rect x="639" y="410" width="12" height="12" fill="#000"/>
<rect x="647" y="393" width="12" height="12" fill="#000"/>
<rect x="353" y="309" width="12" height="12" fill="#000"/>
<rect x="345" y="326" width="12" height="12" fill="#000"/>
<rect x="387" y="309" width="12" height="12" fill="#000"/>
<rect x="395" y="326" width="12" height="12" fill="#000"/>
<rect x="353" y="242" width="12" height="12" fill="#000"/>
<rect x="345" y="225" width="12" height="12" fill="#000"/>
<rect x="387" y="242" width="12" height="12" fill="#000"/>
<rect x="395" y="225" width="12" height="12" fill="#000"/>
<rect x="437" y="309" width="12" height="12" fill="#000"/>
<rect x="429" y="326" width="12" height="12" fill="#000"/>
<rect x="471" y="309" width="12" height="12" fill="#000"/>
<rect x="479" y="326" width="12" height="12" fill="#000"/>
<rect x="437" y="242" width="12" height="12" fill="#000"/>
<rect x="429" y="225" width="12" height="12" fill="#000"/>
<rect x="471" y="242" width="12" height="12" fill="#000"/>
<rect x="479" y="225" width="12" height="12" fill="#000"/>
<rect x="521" y="309" width="12" height="12" fill="#000"/>
<rect x="513" y="326" width="12" height="12" fill="#000"/>
<rect x="555" y="309" width="12" height="12" fill="#000"/>
<rect x="563" y="326" width="12" height="12" fill="#000"/>
<rect x="521" y="242" width="12" height="12" fill="#000"/>
<rect x="513" y="225" width="12" height="12" fill="#000"/>
<rect x="555" y="242" width="12" height="12" fill="#000"/>
<rect x="563" y="225" width="12" height="12" fill="#000"/>
<rect x="605" y="309" width="12" height="12" fill="#000"/>
<rect x="597" y="326" width="12" height="12" fill="#000"/>
<rect x="639" y="309" width="12" height="12" fill="#000"/>
<rect x="647" y="326" width="12" height="12" fill="#000"/>
<rect x="605" y="242" width="12" height="12" fill="#000"/>
<rect x="597" y="225" width="12" height="12" fill="#000"/>
<rect x="639" y="242" width="12" height="12" fill="#000"/>
<rect x="647" y="225" width="12" height="12" fill="#000"/>
</g>
<g font-family="'Liberation Serif',serif" font-size="12.0" fill="#00f" stroke="#00f" stroke-width="0.15">
<text transform="translate(372.84 527) scale(1.05 1)">23</text>
<text transform="translate(389.62 527) scale(1.05 1)">24</text>
<text transform="translate(456.72 527) scale(1.05 1)">25</text>
<text transform="translate(473.5 527) scale(1.05 1)">26</text>
<text transform="translate(540.6 527) scale(1.05 1)">27</text>
<text transform="translate(557.38 527) scale(1.05 1)">28</text>
<text transform="translate(624.48 527) scale(1.05 1)">29</text>
<text transform="translate(641.26 527) scale(1.05 1)">30</text>
<text transform="translate(372.84 359) scale(1.05 1)">31</text>
<text transform="translate(389.62 359) scale(1.05 1)">32</text>
<text transform="translate(456.72 359) scale(1.05 1)">33</text>
<text transform="translate(473.5 359) scale(1.05 1)">34</text>
<text transform="translate(540.6 359) scale(1.05 1)">35</text>
<text transform="translate(557.38 359) scale(1.05 1)">36</text>
<text transform="translate(624.48 359) scale(1.05 1)">37</text>
<text transform="translate(641.26 359) scale(1.05 1)">38</text>
<text transform="translate(372.84 191) scale(1.05 1)">39</text>
<text transform="translate(389.62 191) scale(1.05 1)">40</text>
<text transform="translate(456.72 191) scale(1.05 1)">41</text>
<text transform="translate(473.5 191) scale(1.05 1)">42</text>
<text transform="translate(540.6 191) scale(1.05 1)">43</text>
<text transform="translate(557.38 191) scale(1.05 1)">44</text>
<text transform="translate(624.48 191) scale(1.05 1)">45</text>
<text transform="translate(641.26 191) scale(1.05 1)">46</text>
<text transform="translate(339.29 460) scale(1.05 1)">47</text>
<text transform="translate(339.29 426) scale(1.05 1)">48</text>
<text transform="translate(339.29 292) scale(1.05 1)">49</text>
<text transform="translate(339.29 259) scale(1.05 1)">50</text>
<text transform="translate(423.17 460) scale(1.05 1)">51</text>
<text transform="translate(423.17 426) scale(1.05 1)">52</text>
<text transform="translate(423.17 292) scale(1.05 1)">53</text>
<text transform="translate(423.17 259) scale(1.05 1)">54</text>
<text transform="translate(507.05 460) scale(1.05 1)">55</text>
<text transform="translate(507.05 426) scale(1.05 1)">56</text>
<text transform="translate(507.05 292) scale(1.05 1)">57</text>
<text transform="translate(507.05 259) scale(1.05 1)">58</text>
<text transform="translate(590.93 460) scale(1.05 1)">59</text>
<text transform="translate(590.93 426) scale(1.05 1)">60</text>
<text transform="translate(590.93 292) scale(1.05 1)">61</text>
<text transform="translate(590.93 259) scale(1.05 1)">62</text>
<text transform="translate(674.81 460) scale(1.05 1)">63</text>
<text transform="translate(674.81 426) scale(1.05 1)">64</text>
<text transform="translate(674.81 292) scale(1.05 1)">65</text>
<text transform="translate(674.81 259) scale(1.05 1)">66</text>
<text transform="translate(364.45 477) scale(1.05 1)">67</text>
<text transform="translate(356.07 493) scale(1.05 1)">68</text>
<text transform="translate(398.01 477) scale(1.05 1)">69</text>
<text transform="translate(406.39 493) scale(1.05 1)">70</text>
<text transform="translate(364.45 410) scale(1.05 1)">71</text>
<text transform="translate(356.07 393) scale(1.05 1)">72</text>
<text transform="translate(398.01 410) scale(1.05 1)">73</text>
<text transform="translate(406.39 393) scale(1.05 1)">74</text>
<text transform="translate(448.33 477) scale(1.05 1)">75</text>
<text transform="translate(439.95 493) scale(1.05 1)">76</text>
<text transform="translate(481.89 477) scale(1.05 1)">77</text>
<text transform="translate(490.27 493) scale(1.05 1)">78</text>
<text transform="translate(448.33 410) scale(1.05 1)">79</text>
<text transform="translate(439.95 393) scale(1.05 1)">80</text>
<text transform="translate(481.89 410) scale(1.05 1)">81</text>
<text transform="translate(490.27 393) scale(1.05 1)">82</text>
<text transform="translate(532.21 477) scale(1.05 1)">83</text>
<text transform="translate(523.83 493) scale(1.05 1)">84</text>
<text transform="translate(565.77 477) scale(1.05 1)">85</text>
<text transform="translate(574.15 493) scale(1.05 1)">86</text>
<text transform="translate(532.21 410) scale(1.05 1)">87</text>
<text transform="translate(523.83 393) scale(1.05 1)">88</text>
<text transform="translate(565.77 410) scale(1.05 1)">89</text>
<text transform="translate(574.15 393) scale(1.05 1)">90</text>
<text transform="translate(616.09 477) scale(1.05 1)">91</text>
<text transform="translate(607.71 493) scale(1.05 1)">92</text>
<text transform="translate(649.65 477) scale(1.05 1)">93</text>
<text transform="translate(658.03 493) scale(1.05 1)">94</text>
<text transform="translate(616.09 410) scale(1.05 1)">95</text>
<text transform="translate(607.71 393) scale(1.05 1)">96</text>
<text transform="translate(649.65 410) scale(1.05 1)">97</text>
<text transform="translate(658.03 393) scale(1.05 1)">98</text>
<text transform="translate(364.45 309) scale(1.05 1)">99</text>
<text transform="translate(356.07 326) scale(1.05 1)">100</text>
<text transform="translate(398.01 309) scale(1.05 1)">101</text>
<text transform="translate(406.39 326) scale(1.05 1)">102</text>
<text transform="translate(364.45 242) scale(1.05 1)">103</text>
<text transform="translate(356.07 225) scale(1.05 1)">104</text>
<text transform="translate(398.01 242) scale(1.05 1)">105</text>
<text transform="translate(406.39 225) scale(1.05 1)">106</text>
<text transform="translate(448.33 309) scale(1.05 1)">107</text>
<text transform="translate(439.95 326) scale(1.05 1)">108</text>
<text transform="translate(481.89 309) scale(1.05 1)">109</text>
<text transform="translate(490.27 326) scale(1.05 1)">110</text>
<text transform="translate(448.33 242) scale(1.05 1)">111</text>
<text transform="translate(439.95 225) scale(1.05 1)">112</text>
<text transform="translate(481.89 242) scale(1.05 1)">113</text>
<text transform="translate(490.27 225) scale(1.05 1)">114</text>
<text transform="translate(532.21 309) scale(1.05 1)">115</text>
<text transform="translate(523.83 326) scale(1.05 1)">116</text>
<text transform="translate(565.77 309) scale(1.05 1)">117</text>
<text transform="translate(574.15 326) scale(1.05 1)">118</text>
<text transform="translate(532.21 242) scale(1.05 1)">119</text>
<text transform="translate(523.83 225) scale(1.05 1)">120</text>
<text transform="translate(565.77 242) scale(1.05 1)">121</text>
<text transform="translate(574.15 225) scale(1.05 1)">122</text>
<text transform="translate(616.09 309) scale(1.05 1)">123</text>
<text transform="translate(607.71 326) scale(1.05 1)">124</text>
<text transform="translate(649.65 309) scale(1.05 1)">125</text>
<text transform="translate(658.03 326) scale(1.05 1)">126</text>
<text transform="translate(616.09 242) scale(1.05 1)">127</text>
<text transform="translate(607.71 225) scale(1.05 1)">128</text>
<text transform="translate(649.65 242) scale(1.05 1)">129</text>
<text transform="translate(658.03 225) scale(1.05 1)">130</text>
</g>
<ellipse cx="333.5" cy="532.5" rx="10.6" ry="11.6" fill="#800080"/>
<ellipse cx="417.5" cy="532.5" rx="10.6" ry="11.6" fill="#800080"/>
<ellipse cx="501.5" cy="532.5" rx="10.6" ry="11.6" fill="#800080"/>
<ellipse cx="585.5" cy="532.5" rx="10.6" ry="11.6" fill="#800080"/>
<ellipse cx="669.5" cy="532.5" rx="10.6" ry="11.6" fill="#800080"/>
<ellipse cx="375.5" cy="448.5" rx="10.6" ry="11.6" fill="#800080"/>
<ellipse cx="459.5" cy="448.5" rx="10.6" ry="11.6" fill="#800080"/>
<ellipse cx="543.5" cy="448.5" rx="10.6" ry="11.6" fill="#800080"/>
<ellipse cx="627.5" cy="448.5" rx="10.6" ry="11.6" fill="#800080"/>
<ellipse cx="333.5" cy="365.5" rx="10.6" ry="11.6" fill="#800080"/>
<ellipse cx="417.5" cy="365.5" rx="10.6" ry="11.6" fill="#f00"/>
<ellipse cx="501.5" cy="365.5" rx="10.6" ry="11.6" fill="#f00"/>
<ellipse cx="585.5" cy="365.5" rx="10.6" ry="11.6" fill="#f00"/>
<ellipse cx="669.5" cy="365.5" rx="10.6" ry="11.6" fill="#800080"/>
<ellipse cx="375.5" cy="281.5" rx="10.6" ry="11.6" fill="#800080"/>
<ellipse cx="459.5" cy="281.5" rx="10.6" ry="11.6" fill="#f00"/>
<ellipse cx="543.5" cy="281.5" rx="10.6" ry="11.6" fill="#f00"/>
<ellipse cx="627.5" cy="281.5" rx="10.6" ry="11.6" fill="#800080"/>
<ellipse cx="333.5" cy="197.5" rx="10.6" ry="11.6" fill="#800080"/>
<ellipse cx="417.5" cy="197.5" rx="10.6" ry="11.6" fill="#800080"/>
<ellipse cx="501.5" cy="197.5" rx="10.6" ry="11.6" fill="#800080"/>
<ellipse cx="585.5" cy="197.5" rx="10.6" ry="11.6" fill="#800080"/>
<ellipse cx="669.5" cy="197.5" rx="10.6" ry="11.6" fill="#800080"/>
<g fill="#00f" font-family="'Liberation Serif',serif" font-size="12">
<text x="82.3" y="644.6">-5</text>
<text x="166.3" y="644.6">-4</text>
<text x="250.3" y="644.6">-3</text>
<text x="333.3" y="644.6">-2</text>
<text x="417.3" y="644.6">-1</text>
<text x="501.3" y="644.6">0</text>
<text x="585.3" y="644.6">1</text>
<text x="669.3" y="644.6">2</text>
<text x="753.3" y="644.6">3</text>
<text x="837.3" y="644.6">4</text>
<text x="53.4" y="620.6" text-anchor="end">-3</text>
<text x="53.4" y="536.6" text-anchor="end">-2</text>
<text x="53.4" y="452.6" text-anchor="end">-1</text>
<text x="53.4" y="369.6" text-anchor="end">0</text>
<text x="53.4" y="285.6" text-anchor="end">1</text>
<text x="53.4" y="201.6" text-anchor="end">2</text>
</g>
<defs><linearGradient id="cb" x1="0" y1="1" x2="0" y2="0"><stop offset="0" stop-color="#800080"/><stop offset="0.2" stop-color="#0000ff"/><stop offset="0.4" stop-color="#00ffff"/><stop offset="0.6" stop-color="#00ff00"/><stop offset="0.8" stop-color="#ffff00"/><stop offset="1" stop-color="#ff0000"/></linearGradient></defs>
<rect x="858" y="159.5" width="21" height="470.5" fill="url(#cb)"/>
<g fill="#00f" font-family="'Liberation Serif',serif" font-size="12">
<text transform="translate(878.3 165.2) scale(1.08 1)">1</text>
<text transform="translate(878.3 189.32) scale(1.08 1)">0,948683</text>
<text transform="translate(878.3 337.95) scale(1.08 1)">0,632456</text>
<text transform="translate(878.3 486.57) scale(1.08 1)">0,316228</text>
<text transform="translate(878.3 630.2) scale(1.08 1)">0</text>
<text transform="translate(868.9 402.2) rotate(-90)" font-size="13">Node</text>
</g>
<g fill="none" stroke="#f00" stroke-width="1.3">
<rect x="450.4" y="139.3" width="55.3" height="21.6"/>
<rect x="447.4" y="646.6" width="36" height="21.6"/>
<rect x="10.5" y="386.2" width="27" height="39.4"/>
<rect x="25.2" y="187.5" width="39.3" height="114"/>
</g>
<g fill="#f00" font-family="'Liberation Serif',serif" font-size="12.8">
<text x="461" y="150.8">Graph</text>
<text x="460.6" y="662.7" font-size="11.5">X</text>
<text transform="translate(25.6 410.2) rotate(-90)" font-size="11.5">Y</text>
</g>
<g fill="#f00" font-family="'DejaVu Sans Condensed','DejaVu Sans',sans-serif" font-weight="bold" font-size="16">
<text x="509" y="154.4">2</text>
<text x="485.2" y="672.3">3</text>
<text x="22" y="444.1">4</text>
<text x="38.6" y="249.3">1</text>
</g>
</svg>
</div>
<div id="sep3" class="abs"></div>
<svg class="abs" style="left:926px;top:696px" width="13" height="13" viewBox="926 696 13 13" shape-rendering="crispEdges"><rect x="939" y="699" width="1" height="1" fill="#fff"/><rect x="938" y="698" width="1" height="1" fill="#9a9895"/><rect x="939" y="702" width="1" height="1" fill="#fff"/><rect x="938" y="701" width="1" height="1" fill="#9a9895"/><rect x="936" y="702" width="1" height="1" fill="#fff"/><rect x="935" y="701" width="1" height="1" fill="#9a9895"/><rect x="939" y="705" width="1" height="1" fill="#fff"/><rect x="938" y="704" width="1" height="1" fill="#9a9895"/><rect x="936" y="705" width="1" height="1" fill="#fff"/><rect x="935" y="704" width="1" height="1" fill="#9a9895"/><rect x="933" y="705" width="1" height="1" fill="#fff"/><rect x="932" y="704" width="1" height="1" fill="#9a9895"/><rect x="939" y="708" width="1" height="1" fill="#fff"/><rect x="938" y="707" width="1" height="1" fill="#9a9895"/><rect x="936" y="708" width="1" height="1" fill="#fff"/><rect x="935" y="707" width="1" height="1" fill="#9a9895"/><rect x="933" y="708" width="1" height="1" fill="#fff"/><rect x="932" y="707" width="1" height="1" fill="#9a9895"/><rect x="930" y="708" width="1" height="1" fill="#fff"/><rect x="929" y="707" width="1" height="1" fill="#9a9895"/></svg>
<div id="status" class="abs">Current Point:(1,969479;-1,442048)</div>
</body>
</html>
